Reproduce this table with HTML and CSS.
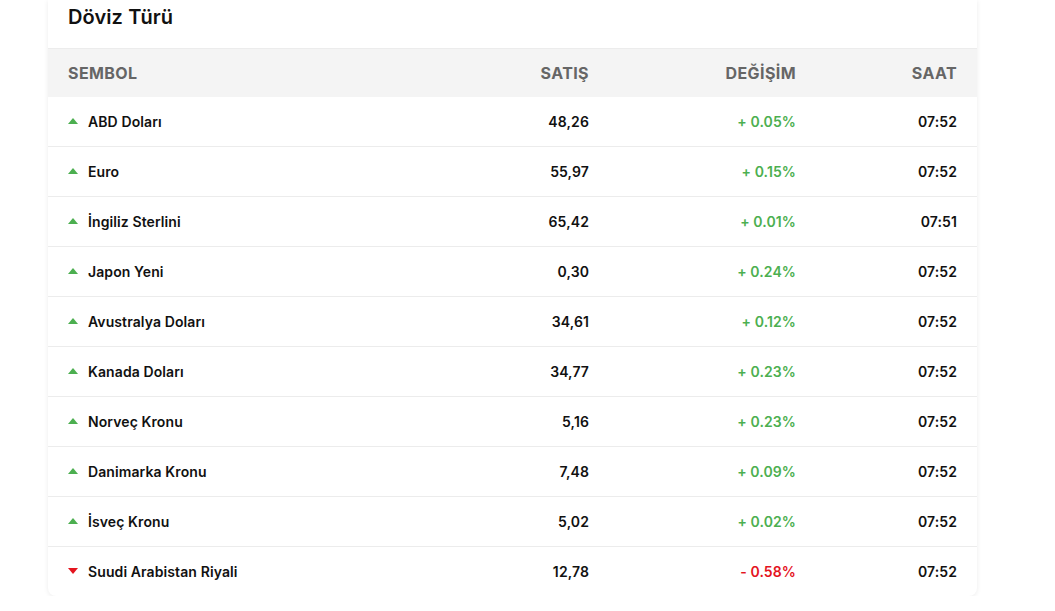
FILE: index.html
```html
<!DOCTYPE html>
<html lang="tr">
<head>
<meta charset="utf-8">
<title>Döviz Türü</title>
<link rel="stylesheet" href="styles.css">
</head>
<body>
<div class="card">
  <div class="title">Döviz Türü</div>
  <div class="row head">
    <div>SEMBOL</div><div class="r">SATIŞ</div><div class="r">DEĞİŞİM</div><div class="r">SAAT</div>
  </div>
  <div class="row"><div class="sym"><span class="tri up"></span>ABD Doları</div><div class="r">48,26</div><div class="r pos">+ 0.05%</div><div class="r">07:52</div></div>
  <div class="row"><div class="sym"><span class="tri up"></span>Euro</div><div class="r">55,97</div><div class="r pos">+ 0.15%</div><div class="r">07:52</div></div>
  <div class="row"><div class="sym"><span class="tri up"></span>İngiliz Sterlini</div><div class="r">65,42</div><div class="r pos">+ 0.01%</div><div class="r">07:51</div></div>
  <div class="row"><div class="sym"><span class="tri up"></span>Japon Yeni</div><div class="r">0,30</div><div class="r pos">+ 0.24%</div><div class="r">07:52</div></div>
  <div class="row"><div class="sym"><span class="tri up"></span>Avustralya Doları</div><div class="r">34,61</div><div class="r pos">+ 0.12%</div><div class="r">07:52</div></div>
  <div class="row"><div class="sym"><span class="tri up"></span>Kanada Doları</div><div class="r">34,77</div><div class="r pos">+ 0.23%</div><div class="r">07:52</div></div>
  <div class="row"><div class="sym"><span class="tri up"></span>Norveç Kronu</div><div class="r">5,16</div><div class="r pos">+ 0.23%</div><div class="r">07:52</div></div>
  <div class="row"><div class="sym"><span class="tri up"></span>Danimarka Kronu</div><div class="r">7,48</div><div class="r pos">+ 0.09%</div><div class="r">07:52</div></div>
  <div class="row"><div class="sym"><span class="tri up"></span>İsveç Kronu</div><div class="r">5,02</div><div class="r pos">+ 0.02%</div><div class="r">07:52</div></div>
  <div class="row last"><div class="sym"><span class="tri down"></span>Suudi Arabistan Riyali</div><div class="r">12,78</div><div class="r neg">- 0.58%</div><div class="r">07:52</div></div>
</div>
</body>
</html>
```
FILE: styles.css
```css
html, body {
  margin: 0;
  padding: 0;
  background: #ffffff;
}
body {
  font-family: Inter, "Noto Sans", sans-serif;
  color: #111111;
}
.card {
  width: 929px;
  margin-left: 48px;
  background: #fff;
  border-radius: 0 0 8px 8px;
  box-shadow: 0 1px 5px rgba(0, 0, 0, 0.08);
}
.title {
  height: 49px;
  box-sizing: border-box;
  padding: 3px 20px 0;
  line-height: 28px;
  font-size: 20px;
  font-weight: 600;
  letter-spacing: 0.1px;
  border-bottom: 1px solid #ececec;
}
.row {
  display: grid;
  grid-template-columns: 400px 121px 207px 161px;
  align-items: center;
  padding: 0 20px;
  height: 50px;
  box-sizing: border-box;
  border-bottom: 1px solid #ececec;
  font-size: 14px;
  font-weight: 600;
  letter-spacing: 0.1px;
}
.row.head {
  height: 48px;
  background: #f4f4f4;
  border-bottom: none;
  font-size: 16px;
  font-weight: 700;
  letter-spacing: 0.4px;
  color: #666666;
}
.row.last {
  border-bottom: none;
  height: 49px;
}
.r {
  text-align: right;
}
.sym {
  display: flex;
  align-items: center;
}
.tri {
  width: 0;
  height: 0;
  border-left: 5px solid transparent;
  border-right: 5px solid transparent;
  margin-right: 10px;
}
.tri.up {
  border-bottom: 6px solid #4caf50;
  margin-top: -2px;
}
.tri.down {
  border-top: 6px solid #e4141e;
  margin-top: -2px;
}
.pos {
  color: #4caf50;
}
.neg {
  color: #e4141e;
}
```
